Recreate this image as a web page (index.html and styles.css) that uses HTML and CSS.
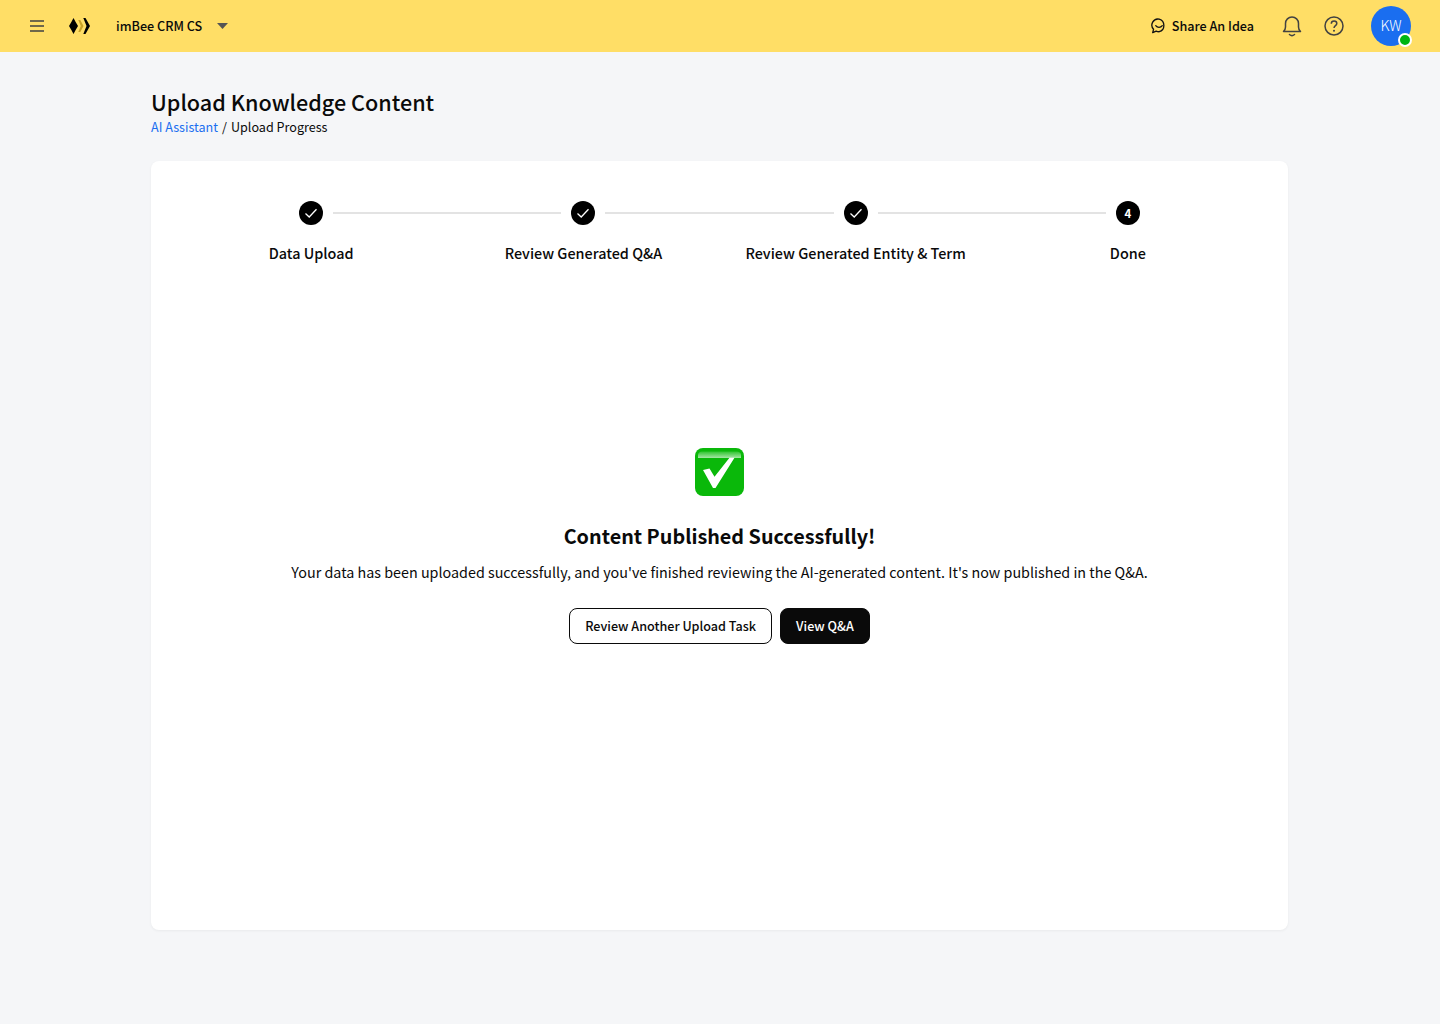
FILE: index.html
```html
<!DOCTYPE html>
<html lang="en">
<head>
<meta charset="utf-8">
<title>Upload Knowledge Content</title>
<link rel="stylesheet" href="styles.css">
</head>
<body>
<header class="topbar">
  <div class="topbar-left">
    <svg class="menu-icon" width="16" height="12" viewBox="0 0 16 12"><path d="M1 1h14M1 6h14M1 11h14" stroke="#424242" stroke-width="1.6" fill="none"/></svg>
    <svg class="logo" width="21" height="16" viewBox="0 0 21 16"><path d="M4.500 0L6.500 3.800 9 8 6.500 12.200 4.500 16 2.500 12.200 0 8 2.500 3.800z" fill="#000"/><path d="M9.300 2h2L14.500 8l-3.200 6h-2L11.800 8z" fill="#c9a227"/><path d="M14.300 0h2.200L21 8l-4.500 8h-2.200L17.500 8z" fill="#000"/></svg>
    <span class="org-name">imBee CRM CS</span>
    <svg class="caret" width="11" height="6" viewBox="0 0 11 6"><path d="M0 0h11L5.500 6z" fill="#555"/></svg>
  </div>
  <div class="topbar-right">
    <div class="idea">
      <svg width="16" height="16" viewBox="0 0 17 17"><path d="M8.700 1.200a7 7 0 0 1 0 13.400c-1.200 0-2.300-.2-3.200-.700L1.800 15.600l.9-3.600A6.500 6.500 0 0 1 8.700 1.200z" fill="none" stroke="#111" stroke-width="1.400" stroke-linejoin="round"/><path d="M5 8.200c1.800 2.400 5.200 2.400 7 0" fill="none" stroke="#111" stroke-width="1.400" stroke-linecap="round"/></svg>
      <span class="idea-text">Share An Idea</span>
    </div>
    <svg class="bell" width="20" height="22" viewBox="0 0 20 22"><path d="M1.500 16.500c1.500-1.500 2-2.500 2-4.500V8.500a6.500 6.500 0 0 1 13 0V12c0 2 .5 3 2 4.500z" fill="none" stroke="#424242" stroke-width="1.500" stroke-linejoin="round"/><path d="M7.500 19.500c1.400 1.300 3.600 1.300 5 0" fill="none" stroke="#424242" stroke-width="1.500" stroke-linecap="round"/></svg>
    <svg class="help" width="20" height="20" viewBox="0 0 20 20"><circle cx="10" cy="10" r="9" fill="none" stroke="#424242" stroke-width="1.500"/><path d="M7.300 7.800c0-1.600 1.200-2.700 2.800-2.700s2.700 1.100 2.700 2.400c0 2.100-2.800 2.200-2.800 4.400" fill="none" stroke="#424242" stroke-width="1.500"/><circle cx="10" cy="14.800" r="1" fill="#424242"/></svg>
    <div class="avatar"><span class="avatar-text">KW</span><span class="status"></span></div>
  </div>
</header>
<main class="page">
  <h1 class="title">Upload Knowledge Content</h1>
  <nav class="crumbs"><a class="crumb-link">AI Assistant</a><span class="crumb-sep">/</span><span>Upload Progress</span></nav>
  <section class="card">
    <ol class="steps">
      <li class="step">
        <div class="step-head"><span class="line line-hidden"></span><span class="dot"><svg width="14" height="14" viewBox="0 0 14 14"><path d="M1.500 7.500l3.700 3.500 7.300-7.800" fill="none" stroke="#fff" stroke-width="1.300"/></svg></span><span class="line"></span></div>
        <div class="step-label">Data Upload</div>
      </li>
      <li class="step">
        <div class="step-head"><span class="line"></span><span class="dot"><svg width="14" height="14" viewBox="0 0 14 14"><path d="M1.500 7.500l3.700 3.500 7.300-7.800" fill="none" stroke="#fff" stroke-width="1.300"/></svg></span><span class="line"></span></div>
        <div class="step-label">Review Generated Q&amp;A</div>
      </li>
      <li class="step">
        <div class="step-head"><span class="line"></span><span class="dot"><svg width="14" height="14" viewBox="0 0 14 14"><path d="M1.500 7.500l3.700 3.500 7.300-7.800" fill="none" stroke="#fff" stroke-width="1.300"/></svg></span><span class="line"></span></div>
        <div class="step-label">Review Generated Entity &amp; Term</div>
      </li>
      <li class="step">
        <div class="step-head"><span class="line"></span><span class="dot dot-num">4</span><span class="line line-hidden"></span></div>
        <div class="step-label">Done</div>
      </li>
    </ol>
    <div class="result">
      <svg class="check-emoji" width="49" height="48" viewBox="0 0 49 48"><defs><linearGradient id="shine" x1="0" y1="0" x2="0" y2="1"><stop offset="0" stop-color="#2fc42f"/><stop offset="1" stop-color="#a5e6a5"/></linearGradient></defs><rect width="49" height="48" rx="8" fill="#0ab80a"/><path d="M3 7c0-2 2-3.500 4-3.500h35c2 0 4 1.500 4 3.500v3H3z" fill="url(#shine)"/><path d="M8 22l6.500-1.500 5 8.200L34.500 9.700h5L20.500 40H18z" fill="#fff"/></svg>
      <h2 class="result-title">Content Published Successfully!</h2>
      <p class="result-text">Your data has been uploaded successfully, and you've finished reviewing the AI-generated content. It's now published in the Q&amp;A.</p>
      <div class="actions">
        <button class="btn btn-outline">Review Another Upload Task</button>
        <button class="btn btn-dark">View Q&amp;A</button>
      </div>
    </div>
  </section>
</main>
</body>
</html>
```
FILE: styles.css
```css
* { box-sizing: border-box; }
html, body { margin: 0; height: 100%; }
body {
  background: #f5f6f8;
  color: #0a0a0a;
  font-family: "Noto Sans CJK SC", "Noto Sans", sans-serif;
  font-size: 14.4px;
}
.topbar {
  height: 52px;
  background: #ffde66;
  display: flex;
  align-items: center;
  justify-content: space-between;
  padding: 0 29px;
}
.topbar-left, .topbar-right { display: flex; align-items: center; }
.menu-icon { margin-right: 24px; }
.logo { margin-right: 26px; }
.org-name { font-size: 12.6px; font-weight: 500; margin-right: 15px; padding-bottom: 2px; }
.idea { display: flex; align-items: center; gap: 5px; font-size: 12.6px; font-weight: 500; margin-right: 28px; }
.idea-text { padding-bottom: 2px; }
.bell { margin-right: 22px; }
.help { margin-right: 27px; }
.avatar {
  position: relative;
  width: 40px;
  height: 40px;
  border-radius: 50%;
  background: #1a6ef0;
  color: #fff;
  font-size: 14.4px;
  font-weight: 300;
  display: flex;
  align-items: center;
  justify-content: center;
}
.avatar-text { padding-bottom: 3px; }
.status {
  position: absolute;
  right: -1px;
  bottom: -1px;
  width: 14px;
  height: 14px;
  border-radius: 50%;
  background: #00b512;
  border: 2px solid #fff;
}
.page { padding: 36px 152px 0 151px; }
.title { margin: 0; font-size: 21.6px; line-height: 28px; font-weight: 500; }
.crumbs { display: flex; gap: 4px; margin-top: 1px; font-size: 12.6px; line-height: 20px; }
.crumb-link { color: #1a6ef0; }
.card {
  margin-top: 24px;
  height: 769px;
  background: #fff;
  border-radius: 8px;
  box-shadow: 0 1px 3px rgba(0, 0, 0, 0.05);
  padding: 40px 24px 0;
  display: flex;
  flex-direction: column;
}
.steps {
  list-style: none;
  margin: 0;
  padding: 0;
  display: grid;
  grid-template-columns: repeat(4, 1fr);
}
.step { display: flex; flex-direction: column; align-items: center; }
.step-head { width: 100%; display: flex; align-items: center; gap: 10px; height: 24px; }
.line { flex: 1; height: 2px; background: #e3e3e3; }
.line-hidden { visibility: hidden; }
.dot {
  flex: none;
  width: 24px;
  height: 24px;
  border-radius: 50%;
  background: #000;
  color: #fff;
  display: flex;
  align-items: center;
  justify-content: center;
  font-size: 11.5px;
  font-weight: 700;
}
.step-label { margin-top: 17px; font-size: 14.4px; line-height: 22px; font-weight: 500; }
.result { margin-top: 184px; display: flex; flex-direction: column; align-items: center; }
.check-emoji { display: block; }
.result-title { margin: 25px 0 0; font-size: 19.8px; line-height: 30px; font-weight: 700; }
.result-text { margin: 10px 0 0; font-size: 14.33px; line-height: 22px; }
.actions { margin-top: 25px; display: flex; gap: 8px; }
.btn {
  height: 36px;
  padding: 0 15px 2px;
  border-radius: 8px;
  font-family: inherit;
  font-size: 12.6px;
  font-weight: 500;
  border: 1px solid #0a0a0a;
}
.btn-outline { background: #fff; color: #0a0a0a; }
.btn-dark { background: #0a0a0a; color: #fff; }
```
